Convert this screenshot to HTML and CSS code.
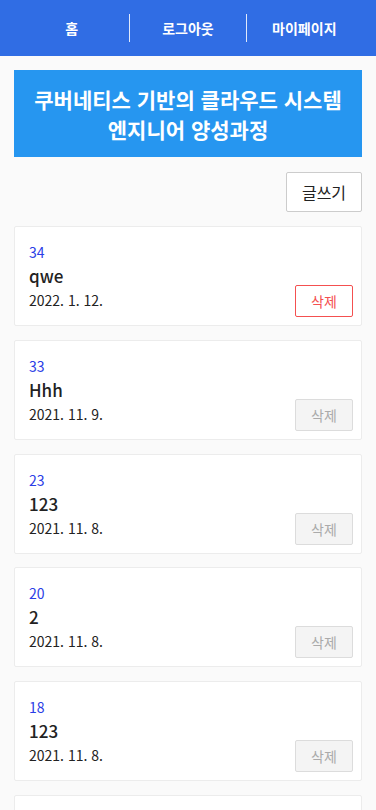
FILE: index.html
```html
<!DOCTYPE html>
<html lang="ko">
<head>
<meta charset="utf-8">
<title>게시판</title>
<link rel="stylesheet" href="styles.css">
</head>
<body>
<nav class="nav">
  <a class="nav-item">홈</a>
  <a class="nav-item">로그아웃</a>
  <a class="nav-item">마이페이지</a>
</nav>
<main class="main">
  <h1 class="banner">쿠버네티스 기반의 클라우드 시스템<br>엔지니어 양성과정</h1>
  <div class="actions"><button class="write-btn">글쓰기</button></div>
  <ul class="list">
    <li class="card">
      <div class="info"><div class="num">34</div><div class="title">qwe</div><div class="date">2022. 1. 12.</div></div>
      <button class="del active">삭제</button>
    </li>
    <li class="card">
      <div class="info"><div class="num">33</div><div class="title">Hhh</div><div class="date">2021. 11. 9.</div></div>
      <button class="del">삭제</button>
    </li>
    <li class="card">
      <div class="info"><div class="num">23</div><div class="title">123</div><div class="date">2021. 11. 8.</div></div>
      <button class="del">삭제</button>
    </li>
    <li class="card">
      <div class="info"><div class="num">20</div><div class="title">2</div><div class="date">2021. 11. 8.</div></div>
      <button class="del">삭제</button>
    </li>
    <li class="card">
      <div class="info"><div class="num">18</div><div class="title">123</div><div class="date">2021. 11. 8.</div></div>
      <button class="del">삭제</button>
    </li>
    <li class="card">
      <div class="info"><div class="num">17</div><div class="title">123</div><div class="date">2021. 11. 8.</div></div>
      <button class="del">삭제</button>
    </li>
  </ul>
</main>
</body>
</html>
```
FILE: styles.css
```css
* { box-sizing: border-box; }
html, body { margin: 0; padding: 0; }
body {
  background: #fafafa;
  font-family: "Noto Sans CJK KR", "Noto Sans", sans-serif;
  color: #222;
}
.nav {
  height: 56px;
  background: #306de4;
  display: flex;
  align-items: center;
  padding: 0 14px;
}
.nav-item {
  flex: 1;
  text-align: center;
  color: #fff;
  font-weight: 700;
  font-size: 14px;
  line-height: 28px;
}
.nav-item + .nav-item { border-left: 1px solid rgba(255,255,255,0.85); }
.main { padding: 14px 14px 0; }
.banner {
  margin: 0;
  height: 87px;
  background: #2696f0;
  color: #fff;
  font-size: 21px;
  font-weight: 700;
  line-height: 30px;
  text-align: center;
  padding-top: 14px;
}
.actions {
  display: flex;
  justify-content: flex-end;
  margin-top: 15px;
}
.write-btn {
  width: 76px;
  height: 40px;
  background: #fff;
  border: 1px solid #ccc;
  border-radius: 2px;
  font-family: inherit;
  font-size: 16px;
  color: #222;
  padding: 0;
}
.list { list-style: none; margin: 14px 0 0; padding: 0; }
.card {
  background: #fff;
  border: 1px solid #ececec;
  border-radius: 2px;
  display: flex;
  justify-content: space-between;
  align-items: flex-end;
  padding: 13px 8px 8px 14px;
  margin-bottom: 13.8px;
}
.info { padding-bottom: 5px; }
.num { color: #2a3de6; font-size: 14px; line-height: 24px; }
.title { font-size: 17px; font-weight: 500; line-height: 24px; color: #222; }
.date { font-size: 14px; line-height: 24px; color: #222; }
.del {
  width: 58px;
  height: 32px;
  font-family: inherit;
  font-size: 14px;
  border-radius: 2px;
  padding: 0;
  background: #f4f4f4;
  border: 1px solid #dcdcdc;
  color: #aaa;
}
.del.active {
  background: #fff;
  border: 1px solid #f45050;
  color: #f45050;
}
```
